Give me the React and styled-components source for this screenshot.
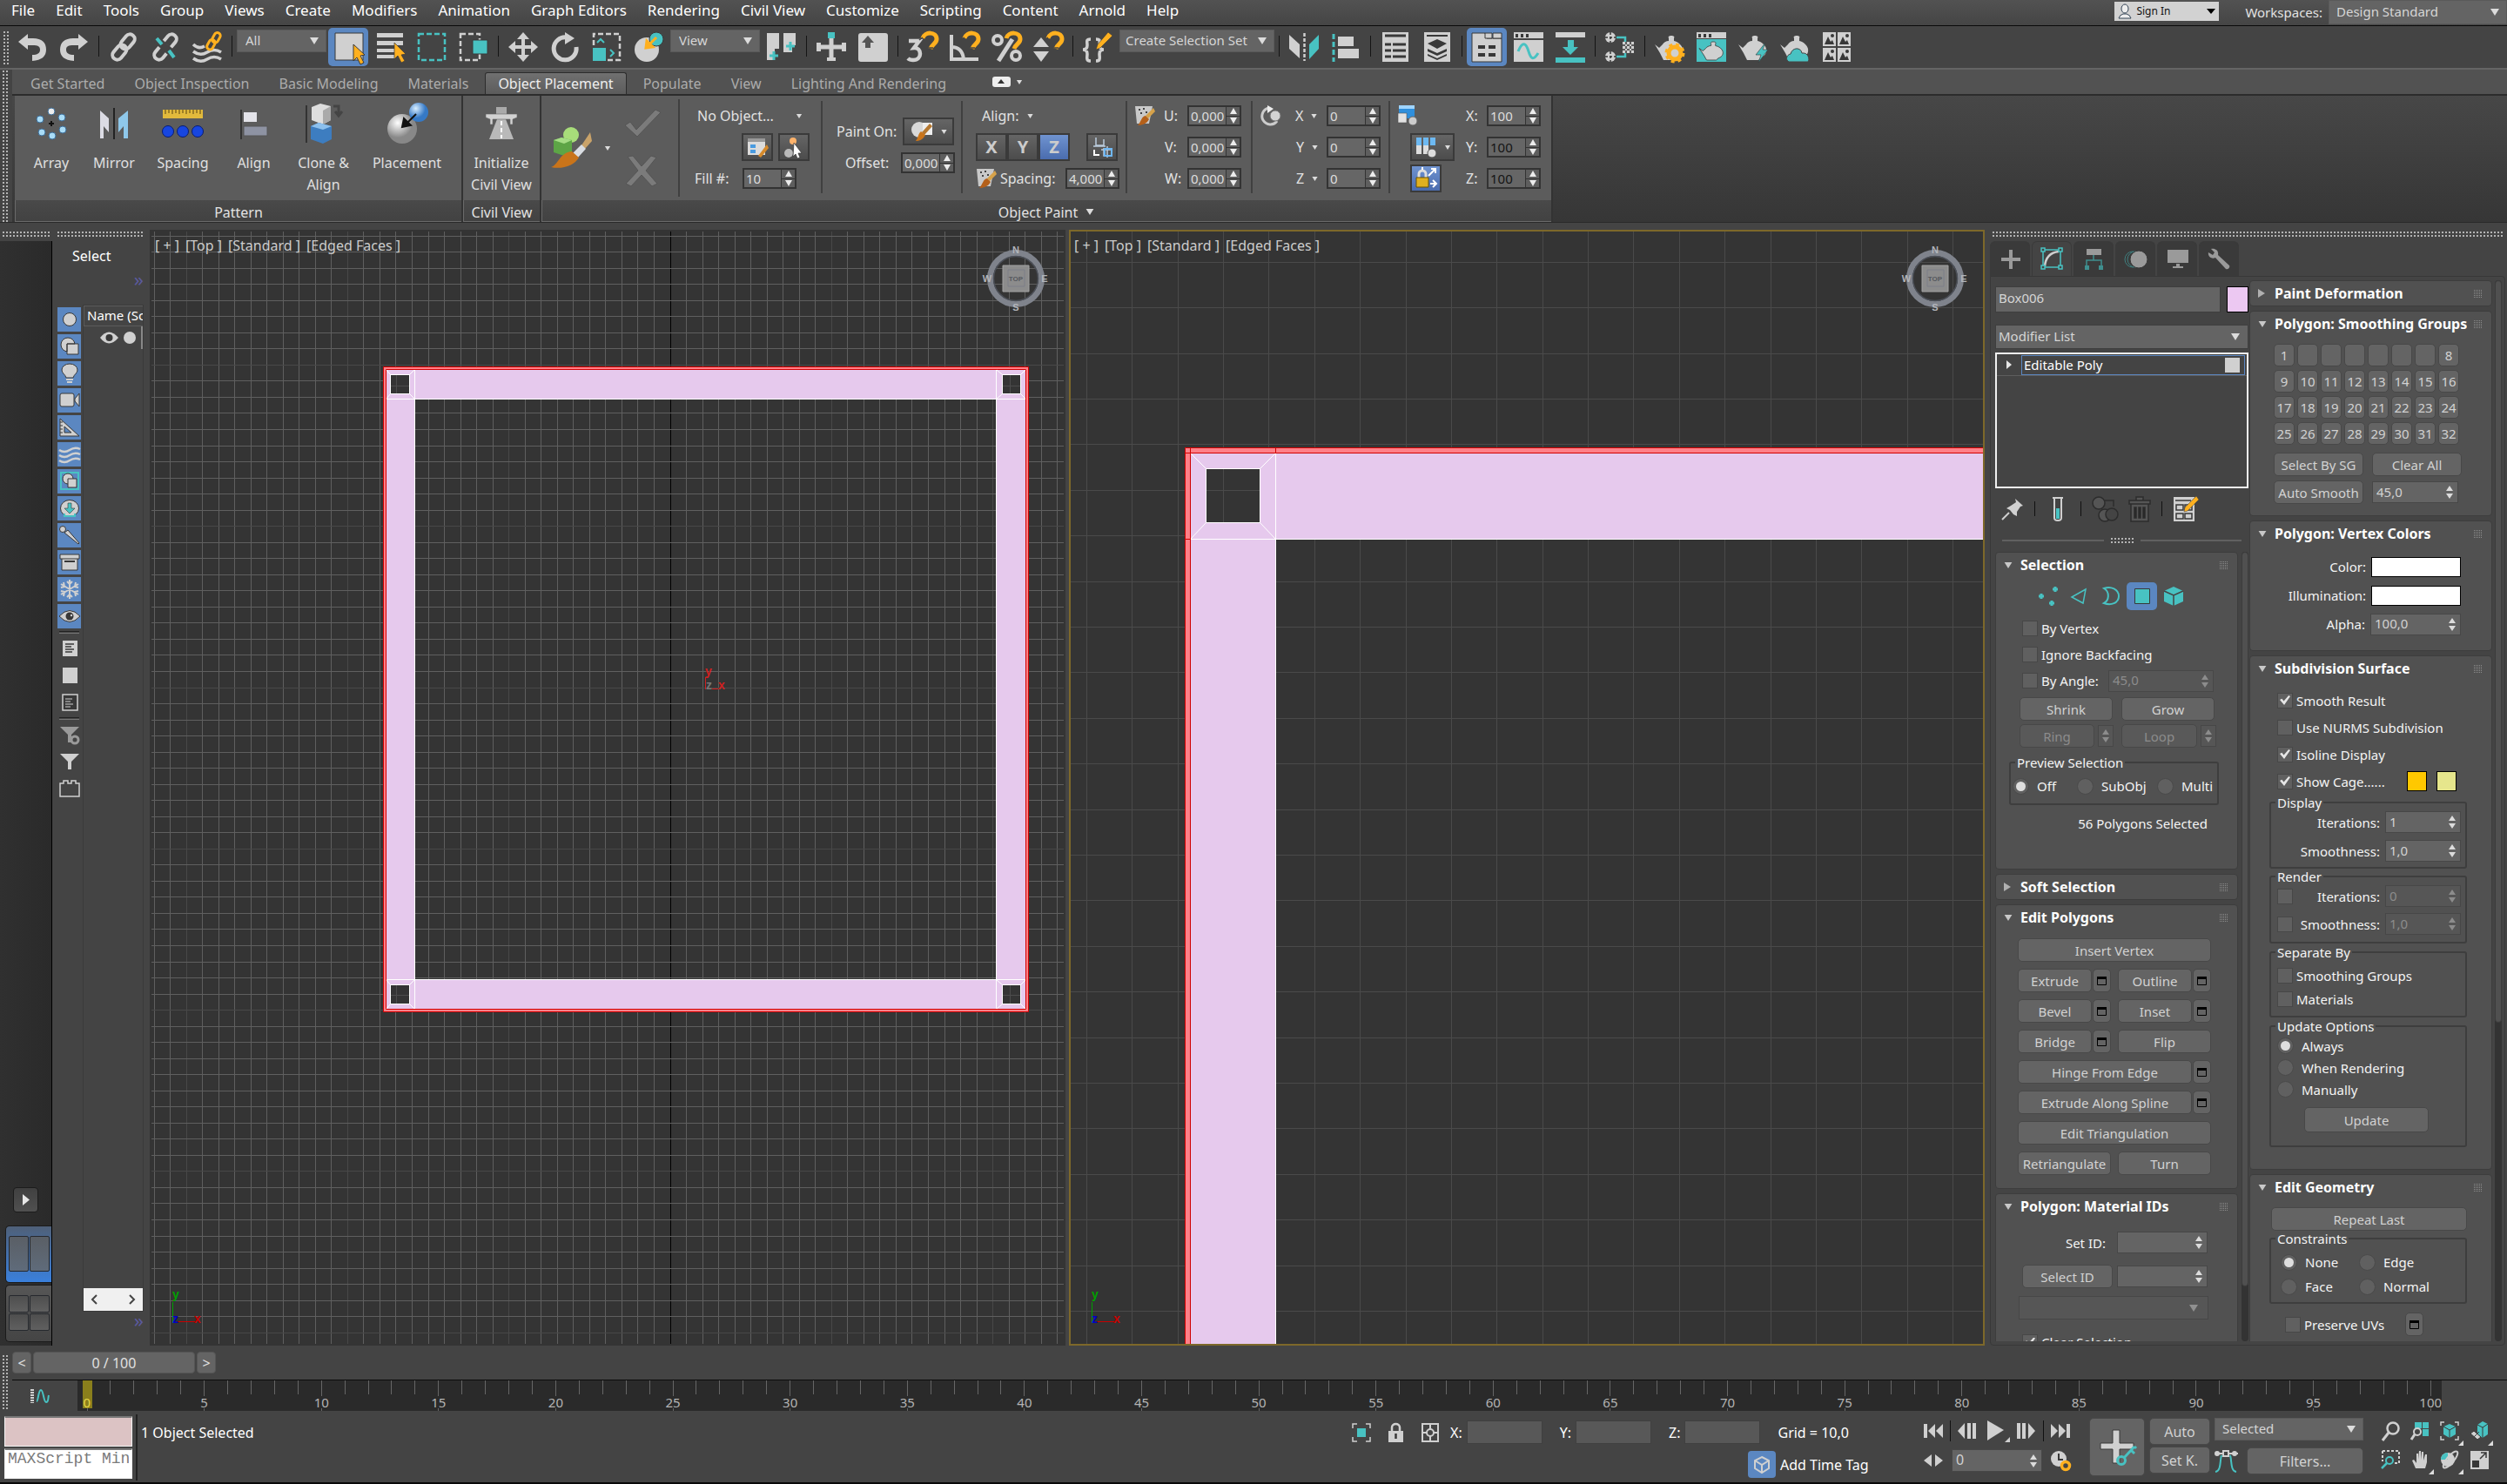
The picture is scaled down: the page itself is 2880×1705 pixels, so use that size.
import React from "react";
import styled, { createGlobalStyle, css } from "styled-components";

const L = "#d0d0d0";
const T = "#48c2c2";
const O = "#ffb01f";
const D = "#383838";

const Global = createGlobalStyle`
  *, *::before, *::after { box-sizing: border-box; }
  html, body { margin: 0; background: #444; }
  body { font-family: "Noto Sans", "Open Sans", sans-serif; font-size: 16px; line-height: 20px; color: #e2e2e2; overflow: hidden; }
  button, input, select { font: inherit; color: inherit; margin: 0; }
  svg { display: block; flex: none; overflow: visible; }
`;

const Shell = styled.div`display: flex; flex-direction: column; height: 100vh; background: #444;`;

/* ---------- shared ---------- */
const PlainButton = styled.button`
  border: 0; padding: 0; background: none; display: flex; align-items: center; justify-content: center; flex: none;
`;
const Grip = styled.div`
  flex: none;
  background: radial-gradient(circle at 1px 1px, #b4b4b4 1px, transparent 1px) 0 0 / 4px 4px;
  ${(p) => (p.$vertical ? css`width: 7px; align-self: stretch;` : css`height: 8px;`)}
`;
const SelectWrap = styled.div`
  display: grid; align-items: center; flex: none;
  width: ${(p) => (p.$w ? `${p.$w}px` : "auto")};
  height: ${(p) => p.$h || 26}px;
  > * { grid-area: 1 / 1; }
  > svg { justify-self: end; margin-right: ${(p) => p.$arrow || 9}px; pointer-events: none; }
`;
const SelectBox = styled.select`
  appearance: none; width: 100%; height: 100%; border: 1px solid ${(p) => p.$line || "#5a5a5a"}; border-radius: 0; outline: 0;
  background: ${(p) => p.$bg || "#646464"}; color: #d6d6d6; padding: 0 ${(p) => p.$pl || 8}px 2px; font-size: 15px; line-height: 20px;
`;
const Caret = ({ w = 10, h = 8, c = "#dcdcdc" }) => (
  <svg width={w} height={h} viewBox="0 0 10 8"><path d="M0 0H10L5 8Z" fill={c} /></svg>
);
const Combo = ({ label, value, bg, line, caret, pl, ...p }) => (
  <SelectWrap {...p}>
    <SelectBox aria-label={label} defaultValue={value} $bg={bg} $line={line} $pl={pl}><option>{value}</option></SelectBox>
    <Caret c={caret} />
  </SelectWrap>
);
const Svg = ({ s = 34, w, h, v, children }) => (
  <svg width={w || s} height={h || s} viewBox={v || `0 0 ${w || s} ${h || s}`} fill="none">{children}</svg>
);

/* ---------- menu bar ---------- */
const MenuBar = styled.header`
  display: flex; flex: none; height: 30px; background: linear-gradient(#525252, #454545); border-bottom: 1px solid #0a0a0a;
`;
const Menus = styled.nav`display: flex; gap: 24px; padding: 2px 13px 0; flex: 1; align-items: flex-start;`;
const MenuItem = styled(PlainButton)`font-size: 17px; line-height: 20px; color: #fff;`;
const SignIn = styled.div`
  display: flex; align-items: center; width: 120px; height: 22px; margin-top: 2px; background: #d2d2d2; padding-left: 4px; flex: none;
`;
const SignText = styled.span`font-size: 12px; color: #111; flex: 1; padding-left: 5px;`;
const WsLabel = styled.label`display: flex; gap: 7px; padding-left: 30px; line-height: 28px; font-size: 15px;`;

const menus = ["File", "Edit", "Tools", "Group", "Views", "Create", "Modifiers", "Animation", "Graph Editors", "Rendering", "Civil View", "Customize", "Scripting", "Content", "Arnold", "Help"];

/* ---------- main toolbar ---------- */
const Toolbar = styled.div`
  display: flex; flex: none; height: 50px; padding: 2px 0 0 4px; background: #444; border-bottom: 2px solid #646464;
`;
const ToolGrip = styled(Grip)`width: 7px; margin: 4px 2px 4px 0;`;
const ToolBtn = styled(PlainButton)`
  width: 48px; height: 44px; position: relative;
  ${(p) => p.$on && css`&::before { content: ""; position: absolute; inset: 0 1px; background: #5b87c1; border-radius: 5px; } > svg { position: relative; }`}
  ${(p) => p.$more && css`&::after { content: ""; position: absolute; right: 4px; bottom: 0; border: 3px solid transparent; border-right-color: #ddd; border-bottom-color: #ddd; }`}
`;
const Sep = styled.i`width: 1px; height: 24px; margin: 9px 4px 0; background: #151515; flex: none;`;
const ComboSlot = styled.div`padding: 2px 1px 0;`;

const teapot = "M0 10l5 4 4-4c1-2 4-4 7-4V3a3 2 0 0 1 3-3 3 2 0 0 1 3 3v3c5 1 9 5 10 9 1 6-3 9-6 10l-3 3H10L6 20Z";
const curveArrow = "M1 11L12 2V7H18C28 7 33 12 33 20C33 28 28 32 17 33V26C23 26 26 24 26 20C26 16 23 15 18 15H12V20Z";
const magnet = <path d="M17 7C19-1 33-1 33 8C33 13 28 13 26 19" stroke={O} strokeWidth="5" />;
const magTip = <path d="M24 18h5M17 6l-4 3" stroke="#444" strokeWidth="1.5" />;
const chain = (c) => (
  <g stroke={c} strokeWidth="4" fill="none">
    <rect x="16" y="1" width="11" height="19" rx="5.5" transform="rotate(40 21 11)" />
    <rect x="7" y="14" width="11" height="19" rx="5.5" transform="rotate(40 13 23)" />
  </g>
);
const waves = <g stroke={L} strokeWidth="3.5" fill="none"><path d="M1 14q6 6 13 2M1 22q8 6 16 1t16 0M1 30q8 6 16 1t16 0" /></g>;
const thumb = (x, y) => <g key={`${x}${y}`}><path d={`M${x} ${y}h15v16h-15z`} fill={L} /><path d={`M${x + 2} ${y + 14}l4-9 3 6 2-2 2 5z`} fill={D} /><circle cx={x + 11} cy={y + 4} r="2" fill={D} /></g>;

const ic = {
  undo: <path d={curveArrow} fill={L} />,
  redo: <path d={curveArrow} fill={L} transform="matrix(-1 0 0 1 34 0)" />,
  link: chain(L),
  unlink: <>{chain(L)}<path d="M4 6L30 29" stroke="#444" strokeWidth="9" /><path d="M7 7l6 7M21 21l6 8" stroke={T} strokeWidth="4" /></>,
  bind: <>{waves}<g stroke={O} strokeWidth="3"><rect x="24" y="0" width="7" height="12" rx="3.5" transform="rotate(30 27 6)" /><rect x="18" y="8" width="7" height="12" rx="3.5" transform="rotate(30 21 14)" /></g></>,
  select: <><path d="M2 1h32v31H2z" fill={L} stroke={D} /><path d="M23 14l13 12-5 1 4 8-4 2-4-8-4 4z" fill={O} stroke={D} /></>,
  byName: <><path d="M2 1h30v5H2zM2 10h30v5H2zM2 19h21v4H2zM2 26h21v4H2z" fill={L} /><path d="M22 12l13 13-5 1 4 7-4 2-4-8-4 4z" fill={O} stroke={D} strokeWidth=".7" /></>,
  rect: <path d="M2 2h30v30H2z" stroke={T} strokeWidth="2.5" strokeDasharray="6 3" />,
  cross: <><path d="M2 2h22v30H2z" stroke={L} strokeWidth="2.5" strokeDasharray="6 3" /><path d="M16 9h17v16H16z" fill={T} stroke={D} /></>,
  move: <path d="M17 0l7 8h-5v7h7v-5l8 7-8 7v-5h-7v7h5l-7 8-7-8h5v-7H8v5l-8-7 8-7v5h7V8h-5z" fill={L} />,
  rotate: <><path d="M19 6A13 13 0 1 0 30 17" stroke={L} strokeWidth="5" /><path d="M17 0l11 7-11 7z" fill={L} /></>,
  scale: <><path d="M2 15V2h30v30H18" stroke={L} strokeWidth="2.5" strokeDasharray="6 3" /><path d="M1 18h15v15H1z" fill={T} /><path d="M6 12l4-4 4 4M21 20l4 4-4 4" stroke={T} strokeWidth="2" /></>,
  place: <><circle cx="15" cy="20" r="14" fill={L} /><circle cx="26" cy="8" r="8" fill={T} stroke={D} /><path d="M26 6l-9 9M14 18l1-8 7 7z" stroke={O} strokeWidth="3" fill={O} /></>,
  pivot: <><path d="M0 1h14v18H9v13H0zM19 1h14v14h-4v8h-10z" fill={L} /><path d="M8 22v10M3 27h10M27 11v10M22 16h10" stroke={T} strokeWidth="3" /></>,
  manip: <><path d="M17 7v26M1 17h32" stroke={L} strokeWidth="5" /><path d="M13 0h8v7h-8z" fill={T} /><path d="M0 12h5v10H0zM29 12h5v10h-5zM12 29h10v4H12z" fill={L} /></>,
  key: <><rect x="0" y="1" width="34" height="33" rx="3" fill={L} /><path d="M11 4l7 8h-4v6H8v-6H4z" fill="#555" /></>,
  snap3: <><path d="M1 10h12l-6 8c9-1 10 14-1 14-3 0-5-1-6-2" stroke={L} strokeWidth="4.5" />{magnet}{magTip}</>,
  angle: <><path d="M2 3v28h31M2 17c8 0 13 5 14 14" stroke={L} strokeWidth="4" />{magnet}{magTip}</>,
  percent: <><circle cx="7" cy="9" r="5" stroke={L} strokeWidth="4" /><circle cx="28" cy="27" r="5" stroke={L} strokeWidth="4" /><path d="M24 8L8 33" stroke={L} strokeWidth="5" />{magnet}</>,
  spinner: <><path d="M0 17l9-11 9 11zM0 22h18l-9 12z" fill={L} />{magnet}{magTip}</>,
  braces: <><path d="M9 8c-6 0-4 3-4 7s-2 5-5 5c3 0 5 1 5 5s-2 8 4 8M15 8c6 0 4 3 4 7s2 5 5 5c-3 0-5 1-5 5s2 8-4 8" stroke={L} strokeWidth="3.5" /><path d="M29 0l5 4-14 14-5 2 2-6z" fill={O} stroke={D} strokeWidth=".6" /></>,
  mirror: <><path d="M0 3l12 11v16L0 19z" fill={L} /><path d="M34 3L23 14v17l11-12z" fill={T} /><path d="M17.5 1v32" stroke={L} strokeWidth="2.5" strokeDasharray="4 2" /></>,
  align: <><path d="M3 2v32" stroke={T} strokeWidth="3" strokeDasharray="6 3" /><path d="M8 5h18v11H8zM8 19h24v11H8z" fill={L} /></>,
  list: <><path d="M2 0h30v34H2z" fill={L} /><path d="M5 4h24M5 14h7M14 14h15M5 21h7M14 21h15M5 28h7M14 28h15" stroke={D} strokeWidth="3" /></>,
  layers: <><path d="M2 0h30v34H2z" fill={L} /><path d="M5 4h24" stroke={D} strokeWidth="2" /><path d="M17 8l11 5-11 6-11-6zM6 19l11 5 11-5v3l-11 5-11-5zM6 25l11 5 11-5v2l-11 5-11-5z" fill={D} /></>,
  ribbon: <><path d="M0 1h15l2 6h17v27H0z" fill={L} stroke={D} /><path d="M15 1h8v6h-8zM24 1h10v6H24z" fill={L} stroke={D} /><path d="M7 17h8M19 17h8M7 26h8M19 26h8" stroke={D} strokeWidth="4" /></>,
  curve: <><path d="M0 0h34v7H0zM0 9h34v25H0z" fill={L} /><path d="M2 2h3v4H2zM8 2h3v4H8zM14 2h3v4h-3z" fill={D} /><path d="M5 22c5-12 9-10 12 0s6 10 11 2" stroke={T} strokeWidth="3" /></>,
  dope: <><path d="M0 0h34v6H0z" fill={L} /><path d="M0 29h34v6H0z" fill={T} /><path d="M14 9h7v8h5l-9 9-9-9h6z" fill={T} /></>,
  schem: <><path d="M13 6h10v22H13" stroke={T} strokeWidth="2.5" /><g fill={L}><circle cx="6" cy="6" r="6" /><rect x="20" y="11" width="13" height="13" /><circle cx="6" cy="28" r="6" /></g><path d="M6 0v12M0 6h12M6 22v12M0 28h12M24 11v13M29 11v13M20 15h13M20 20h13" stroke={D} strokeWidth="1.5" strokeDasharray="3 2" /></>,
  rsetup: <><g transform="translate(0 4)"><path d={teapot} fill={L} /></g><circle cx="23" cy="24" r="7" stroke={O} strokeWidth="5" /><circle cx="23" cy="24" r="10" stroke={O} strokeWidth="3" strokeDasharray="4 4" /></>,
  rframe: <><path d="M0 0h34v7H0z" fill={L} /><path d="M0 8h34v26H0z" fill={T} /><path d="M2 2h3v4H2zM8 2h3v4H8zM14 2h3v4h-3z" fill={D} /><g transform="translate(3 11) scale(.85 .75)"><path d={teapot} fill={L} stroke={D} /></g></>,
  render: <><g transform="translate(0 4)"><path d={teapot} fill={L} /></g><path d="M31 12L20 26h6l-3 9 11-15h-6z" fill={T} stroke={D} strokeWidth=".6" /></>,
  rcloud: <><g transform="translate(0 4)"><path d={teapot} fill={L} /></g><path d="M10 34c-4-2-3-8 2-9 2-8 12-8 13-1 8-1 9 8 7 10z" fill={T} stroke="#444" /></>,
  gallery: <>{[[1, 0], [18, 0], [1, 18], [18, 18]].map(([x, y]) => thumb(x, y))}</>,
};

const tools = [
  ["undo", "Undo"], ["redo", "Redo"], "|", ["link", "Select and Link"], ["unlink", "Unlink"], ["bind", "Bind to Space Warp"], "|",
  { value: "All", label: "Selection filter", w: 103 },
  ["select", "Select Object", 1], ["byName", "Select by Name"], ["rect", "Rectangular Region", 0, 1], ["cross", "Window Crossing"], "|",
  ["move", "Move"], ["rotate", "Rotate"], ["scale", "Scale", 0, 1], ["place", "Place", 0, 1],
  { value: "View", label: "Reference coordinates", w: 103 },
  ["pivot", "Pivot Center", 0, 1], "|", ["manip", "Manipulate"], ["key", "Keyboard Override"], "|",
  ["snap3", "Snaps", 0, 1], ["angle", "Angle Snap"], ["percent", "Percent Snap"], ["spinner", "Spinner Snap"], "|", ["braces", "Edit Selection Sets"],
  { value: "Create Selection Set", label: "Named selection sets", w: 178, pl: 6 }, "|",
  ["mirror", "Mirror"], ["align", "Align", 0, 1], "|", ["list", "Scene Explorer"], ["layers", "Layer Explorer"], "|",
  ["ribbon", "Ribbon", 1], ["curve", "Curve Editor"], ["dope", "Dope Sheet"], "|", ["schem", "Material Editor", 0, 1], "|",
  ["rsetup", "Render Setup"], ["rframe", "Rendered Frame"], ["render", "Render", 0, 1], ["rcloud", "Cloud Render"], ["gallery", "Gallery"],
];

/* ---------- ribbon ---------- */
const RibbonWrap = styled.section`display: flex; flex: none; height: 176px; padding-left: 3px; border-bottom: 1px solid #2a2a2a;`;
const RibbonGrip = styled(Grip)`margin: 1px 4px 0 0;`;
const RibbonMain = styled.div`flex: 1; min-width: 0; display: flex; flex-direction: column;`;
const Tabs = styled.div`display: flex; height: 30px; background: #525252; border-bottom: 2px solid #2c2c2c; padding: 3px 0 0 4px; flex: none;`;
const Tab = styled(PlainButton)`
  padding: 0 14px; margin: 0 2px; height: 25px; color: #acacac; border: 1px solid transparent; border-bottom: 0; border-radius: 3px 3px 0 0;
  ${(p) => p.$on && css`background: linear-gradient(#707070, #5c5c5c); color: #eee; border-color: #2c2c2c;`}
`;
const TabExtra = styled(PlainButton)`gap: 6px; margin-left: 36px; padding-bottom: 3px;`;
const Panels = styled.div`flex: 1; display: flex; padding-left: 3px; background: linear-gradient(#474747, #363636);`;
const Panel = styled.div`display: flex; flex-direction: column; background: #5c5c5c; border-right: 2px solid #333; flex: none; width: ${(p) => p.$w}px;`;
const PanelBody = styled.div`flex: 1; display: flex; align-items: flex-start;`;
const PanelFoot = styled.div`
  height: 25px; display: flex; align-items: center; justify-content: center; gap: 8px; padding-top: 3px;
  background: linear-gradient(#494949, #424242); border-bottom: 1px solid #6a6a6a; border-left: 1px solid #6a6a6a;
`;
const BigBtn = styled(PlainButton)`
  flex-direction: column; justify-content: flex-start; width: ${(p) => p.$w}px; line-height: 25px; padding-top: 8px; color: #e0e0e0;
  > svg { margin-bottom: 9px; }
`;
const PaintGroup = styled.div`
  display: grid; grid-auto-rows: 36px; align-content: center; height: 106px; margin-top: 6px; width: ${(p) => p.$w}px; flex: none;
  border-right: ${(p) => (p.$last ? 0 : 2)}px solid #404040; padding-left: ${(p) => p.$pl || 8}px;
`;
const PRow = styled.div`display: flex; align-items: center;`;
const Cell = styled.span`display: flex; align-items: center; width: ${(p) => p.$w}px; flex: none; white-space: nowrap; gap: 9px; padding-left: ${(p) => p.$pl || 0}px;`;
const RBtn = styled(PlainButton)`
  width: ${(p) => p.$w || 36}px; height: 32px; gap: 9px; border: 2px solid #3a3a3a; color: #ccc; font-weight: 700; font-size: 20px; margin-left: ${(p) => p.$ml || 0}px;
  background: ${(p) => (p.$on ? "linear-gradient(#6f93d0, #4a6cae)" : "linear-gradient(#656565, #4c4c4c)")};
`;
const RSpin = styled.span`display: flex; width: 62px; height: 24px; border: 2px solid #333; background: #666; flex: none;`;
const RInput = styled.input`width: 42px; border: 0; padding: 0 0 1px 2px; background: none; outline: 0; font-size: 15px; color: ${(p) => (p.$dim ? "#141414" : "#dedede")};`;
const RArrows = styled.span`
  width: 16px; display: grid; place-items: center; border-left: 1px solid #333; background: linear-gradient(#5e5e5e 49%, #333 49%, #333 54%, #5e5e5e 54%);
`;
const RibSpin = ({ label, value, dim }) => (
  <RSpin><RInput aria-label={label} defaultValue={value} $dim={dim} /><RArrows><Svg w={8} h={18}><path d="M0 7l4-7 4 7zM0 11h8l-4 7z" fill="#ececec" /></Svg></RArrows></RSpin>
);
const PaintStart = styled.div`display: flex; align-items: center; gap: 14px; padding-left: 10px; height: 112px; width: 159px; margin-top: 4px; border-right: 2px solid #404040; flex: none;`;
const CheckCol = styled.div`display: grid; gap: 18px;`;

const Ball = ({ x, y, r = 4, c }) => <circle cx={x} cy={y} r={r} fill={c} stroke="#3b6d99" strokeWidth="1" />;
const icArray = <Svg s={36}>{[[18, 4, "#eee"], [30, 11], [31, 25], [19, 32], [7, 28], [5, 13]].map(([x, y, c]) => <Ball key={x} x={x} y={y} c={c || "#a9dcf7"} />)}<path d="M18 15v6M15 18h6" stroke="#111" strokeWidth="2" /></Svg>;
const icMirror = <Svg s={36}><path d="M18 0v36" stroke="#222" strokeWidth="2" /><path d="M2 3l10 9v16l-6-7v14H2z" fill="#dcdce4" /><path d="M34 3l-11 9v16l6-7v14h5z" fill="#8fc8ea" /></Svg>;
const icSpacing = <Svg w={48} h={36}><path d="M1 2h46v10H1z" fill="#e2ba3c" /><path d="M4 2v5M8 2v4M12 2v5M16 2v4M20 2v5M24 2v4M28 2v5M32 2v4M36 2v5M40 2v4M44 2v5" stroke="#5b4510" />{[7, 24, 41].map((x) => <circle key={x} cx={x} cy="27" r="6.5" fill="#1746e0" stroke="#0a1d70" />)}</Svg>;
const icAlign = <Svg s={36}><path d="M3 2v34" stroke="#333" strokeWidth="2" /><path d="M6 5h15v11H6z" fill="#e3e3e9" /><path d="M6 21h27v11H6z" fill="#8e93a3" stroke="#555" /></Svg>;
const icClone = <Svg w={44} h={48}><path d="M2 3v43" stroke="#333" strokeWidth="2" /><path d="M8 5l10-4 12 3v16l-9 5-13-5z" fill="#dedede" /><path d="M21 9l9-5v16l-9 5z" fill="#aaa" /><path d="M7 27l9-4 15 4v15l-10 5-14-5z" fill="#3d7dc0" /><path d="M7 27l9-4 15 4-10 4z" fill="#8cc0ee" /><path d="M33 4h6v9M35 10l4 5 4-5" stroke="#444" strokeWidth="3" /></Svg>;
const icPlacement = <Svg s={48}><defs><radialGradient id="gw" cx=".35" cy=".3"><stop stopColor="#fff" /><stop offset="1" stopColor="#888" /></radialGradient><radialGradient id="gb" cx=".35" cy=".3"><stop stopColor="#d9eeff" /><stop offset="1" stopColor="#3579c6" /></radialGradient></defs><circle cx="18" cy="30" r="17" fill="url(#gw)" /><circle cx="37" cy="11" r="11" fill="url(#gb)" /><path d="M34 13L22 25M18 28l2-10 8 8z" stroke="#111" strokeWidth="2" fill="#111" /></Svg>;
const icRoad = <Svg s={38}><path d="M14 14h10l9 23H5z" fill="#b9b9b9" /><path d="M19 16v20" stroke="#fff" strokeWidth="2" strokeDasharray="5 3" /><path d="M13 0h12v8H13z" fill="#aaa" /><path d="M1 8h36v4l-5 2v6h-3v-6H9v6H6v-6l-5-2z" fill="#d2d2d2" stroke="#666" strokeWidth=".6" /></Svg>;
const icPaint = <Svg s={48}><circle cx="24" cy="9" r="9" fill="#a8dd7a" /><path d="M4 15l9-3 12 3v14l-9 4-12-4z" fill="#5da546" /><path d="M4 15l9-3 12 3-9 4z" fill="#a5dd85" /><path d="M46 6l2 10-8 9-4-4z" fill="#c9a36a" /><path d="M36 20l5 5-10 11-6-5z" fill="#d9dde2" /><path d="M25 28l8 7C28 44 14 49 1 46c8-2 10-17 24-18z" fill="#c9741a" /></Svg>;
const icBrushSmall = <Svg s={24}><path d="M1 1h20l-4 20H3z" fill="#c9c9c9" /><path d="M5 5h2M10 4h2M7 9h2M13 8h2" stroke="#444" strokeWidth="2" /><path d="M22 3l2 4-8 8-3-3z" fill="#d6a24a" /><path d="M13 12l4 4c-3 6-9 7-13 7 4-4 4-10 9-11z" fill="#b4601a" /></Svg>;

const Ribbon = () => (
  <RibbonWrap>
    <RibbonGrip $vertical />
    <RibbonMain>
      <Tabs role="tablist">
        {["Get Started", "Object Inspection", "Basic Modeling", "Materials", "Object Placement", "Populate", "View", "Lighting And Rendering"].map((t) => (
          <Tab key={t} role="tab" $on={t === "Object Placement"}>{t}</Tab>
        ))}
        <TabExtra aria-label="Minimize ribbon"><Svg w={21} h={12}><rect width="21" height="12" rx="3" fill="#eee" /><path d="M6 8l4-5 4 5z" fill="#333" /></Svg><Caret w={8} h={5} /></TabExtra>
      </Tabs>
      <Panels>
        <Panel $w={515}>
          <PanelBody>
            <BigBtn $w={84}><Svg w={36} h={48} v="0 -6 36 48">{icArray}</Svg>Array</BigBtn>
            <BigBtn $w={60}><Svg w={36} h={48} v="0 -6 36 48">{icMirror}</Svg>Mirror</BigBtn>
            <BigBtn $w={98}><Svg w={48} h={48} v="0 -6 48 48">{icSpacing}</Svg>Spacing</BigBtn>
            <BigBtn $w={65}><Svg w={36} h={48} v="0 -6 36 48">{icAlign}</Svg>Align</BigBtn>
            <BigBtn $w={95}>{icClone}<span>Clone &amp;<br />Align</span></BigBtn>
            <BigBtn $w={97}>{icPlacement}Placement</BigBtn>
          </PanelBody>
          <PanelFoot>Pattern</PanelFoot>
        </Panel>
        <Panel $w={90}>
          <PanelBody><BigBtn $w={88}><Svg w={38} h={48} v="0 -5 38 48">{icRoad}</Svg><span>Initialize<br />Civil View</span></BigBtn></PanelBody>
          <PanelFoot>Civil View</PanelFoot>
        </Panel>
        <Panel $w={1162}>
          <PanelBody>
            <PaintStart>
              {icPaint}<Caret w={8} h={5} />
              <CheckCol>
                <Svg w={44} h={34}><path d="M2 19l6-4 7 9L37 1l6 3-27 28z" fill="#7b7b7b" stroke="#555" /></Svg>
                <Svg w={44} h={38}><path d="M5 3l6-1 10 12L32 2l6 2-12 15 13 15-6 3-12-13L9 37l-6-3 14-15z" fill="#7b7b7b" stroke="#555" /></Svg>
              </CheckCol>
            </PaintStart>
            <PaintGroup $w={164} $pl={17}>
              <PRow><Cell $w={116} $pl={3}>No Object...</Cell><Caret w={8} h={5} /></PRow>
              <PRow><Cell $w={54} /><RBtn aria-label="Edit object list"><Svg s={26}><path d="M2 3h20v19H2z" fill="#dcdcdc" /><path d="M2 3h20v4H2z" fill="#999" /><path d="M5 10h6v4H5zM5 16h6v4H5z" fill="#4a9be0" /><path d="M24 10l2 4-9 11-3-2z" fill="#d68a2b" /></Svg></RBtn><RBtn $ml={6} aria-label="Pick object"><Svg s={26}><circle cx="7" cy="20" r="5" fill="#bbb" /><circle cx="12" cy="6" r="4" fill="#ffb36b" /><path d="M13 8l9 12-4 0 2 5-3 1-2-5-3 3z" fill="#fff" stroke="#333" strokeWidth=".7" /></Svg></RBtn></PRow>
              <PRow><Cell $w={55}>Fill #:</Cell><RibSpin label="Fill count" value="10" /></PRow>
            </PaintGroup>
            <PaintGroup $w={161} $pl={16}>
              <PRow><Cell $w={76}>Paint On:</Cell><RBtn $w={59} aria-label="Paint on"><Svg s={26}><circle cx="10" cy="11" r="9" fill="#d8d8d8" /><path d="M14 3h11v14H14z" fill="#eee" /><path d="M22 4l3 3-9 10-3-3z" fill="#b57830" /><path d="M12 13l5 4c-3 6-7 7-11 7 3-4 3-9 6-11z" fill="#c9741a" /></Svg><Caret w={7} h={5} /></RBtn></PRow>
              <PRow><Cell $w={74} $pl={10}>Offset:</Cell><RibSpin label="Offset" value="0,000" /></PRow>
            </PaintGroup>
            <PaintGroup $w={189} $pl={15}>
              <PRow><Cell $w={100} $pl={7}>Align:<Caret w={7} h={5} /></Cell></PRow>
              <PRow><RBtn>X</RBtn><RBtn>Y</RBtn><RBtn $on>Z</RBtn><Cell $w={19} /><RBtn aria-label="Align to normal"><Svg s={26}><path d="M6 2v9h9V4M3 12h14M15 14v9h8M12 16h13M19 12v13" stroke="#bcd" strokeWidth="1.5" /><path d="M16 15h8v8h-8z" stroke="#6fb7f2" strokeWidth="2" /><path d="M4 16v6h6" stroke="#fff" strokeWidth="2" /></Svg></RBtn></PRow>
              <PRow>{icBrushSmall}<Cell $w={79} $pl={4}>Spacing:</Cell><RibSpin label="Spacing" value="4,000" /></PRow>
            </PaintGroup>
            <PaintGroup $w={144}>
              <PRow>{icBrushSmall}<Cell $w={37} $pl={10}>U:</Cell><RibSpin label="U" value="0,000" /></PRow>
              <PRow><Cell $w={61} $pl={35}>V:</Cell><RibSpin label="V" value="0,000" /></PRow>
              <PRow><Cell $w={61} $pl={35}>W:</Cell><RibSpin label="W" value="0,000" /></PRow>
            </PaintGroup>
            <PaintGroup $w={158}>
              <PRow><Svg s={24}><path d="M11 3A9.5 9.5 0 1 0 20 18" stroke="#ccc" strokeWidth="3" /><path d="M9 0l7 4-7 5z" fill="#eee" /><circle cx="18" cy="12" r="6" fill="#d4d4d4" stroke="#777" /></Svg><Cell $w={53} $pl={17}>X<Caret w={7} h={5} /></Cell><RibSpin label="Rotate X" value="0" /></PRow>
              <PRow><Cell $w={77} $pl={42}>Y<Caret w={7} h={5} /></Cell><RibSpin label="Rotate Y" value="0" /></PRow>
              <PRow><Cell $w={77} $pl={42}>Z<Caret w={7} h={5} /></Cell><RibSpin label="Rotate Z" value="0" /></PRow>
            </PaintGroup>
            <PaintGroup $w={184} $last>
              <PRow><Svg s={24}><path d="M2 0h18v15H2z" fill="#2f8fdc" /><path d="M2 0h18v4H2z" fill="#9fd4ff" /><path d="M1 9h10v11H1z" fill="#e2e2e2" stroke="#555" strokeWidth=".6" /><circle cx="18" cy="18" r="5" fill="#ccc" stroke="#666" /></Svg><Cell $w={79} $pl={55}>X:</Cell><RibSpin label="Scale X" value="100" /></PRow>
              <PRow><Cell $w={15} /><RBtn $w={51} aria-label="Scale mode"><Svg s={26}><path d="M2 2h6v9H2zM10 2h6v9h-6zM18 2h6v9h-6z" fill="#6db9f2" /><path d="M2 11h6v10H2zM10 11h6v10h-6z" fill="#ddd" /><circle cx="20" cy="20" r="5" fill="#ddd" stroke="#555" /></Svg><Caret w={6} h={5} /></RBtn><Cell $w={37} $pl={13}>Y:</Cell><RibSpin label="Scale Y" value="100" dim /></PRow>
              <PRow><Cell $w={15} /><RBtn $on aria-label="Lock scale axes"><Svg s={26}><path d="M5 12V8a4 4 0 0 1 8 0v4" stroke="#ddd" strokeWidth="3" /><path d="M2 12h14v11H2z" fill="#e0b020" stroke="#6b5200" /><path d="M16 10l7-7M19 2h5v5M18 19h6M21 15l4 4-4 4M9 3V0" stroke="#fff" strokeWidth="2" /></Svg></RBtn><Cell $w={52} $pl={28}>Z:</Cell><RibSpin label="Scale Z" value="100" dim /></PRow>
            </PaintGroup>
          </PanelBody>
          <PanelFoot>Object Paint<Caret w={12} h={7} /></PanelFoot>
        </Panel>
      </Panels>
    </RibbonMain>
  </RibbonWrap>
);

/* ---------- workspace ---------- */
const Workspace = styled.main`flex: 1; min-height: 0; display: flex;`;
const Strip = styled.aside`width: 60px; flex: none; display: flex; flex-direction: column; padding-top: 10px; gap: 3px;`;
const StripGrip = styled(Grip)`margin-left: 3px; width: 55px;`;
const StripBody = styled.div`
  flex: 1; display: flex; flex-direction: column; justify-content: flex-end; gap: 2px; padding: 0 0 4px 6px;
  background: linear-gradient(90deg, #303030, #2a2a2a); border-right: 1px solid #000;
`;
const PlayTab = styled(PlainButton)`width: 29px; height: 29px; margin: 0 0 13px 9px; background: linear-gradient(#404040, #505050); border: 1px solid #1c1c1c; border-radius: 4px;`;
const LayoutTab = styled(PlainButton)`
  height: 66px; border: 1px solid #1b1b1b; border-right: 0; border-radius: 5px 0 0 5px; display: grid; gap: 1px; padding: 11px 2px 12px 3px;
  grid-template-columns: 1fr 1fr; align-items: stretch; justify-content: stretch;
  background: ${(p) => (p.$on ? "linear-gradient(#4f6078, #3a80dc)" : "linear-gradient(#565656, #454545)")};
`;
const Pane = styled.i`border: 1px solid #26292e; border-radius: 2px; background: linear-gradient(#5a5f66, #5f6b7a);
  ${(p) => p.$grey && css`background: linear-gradient(#4e4e4e, #606060);`}`;

const Explorer = styled.aside`width: 112px; flex: none; display: flex; flex-direction: column; padding: 10px 6px 0;`;
const ExTop = styled.div`height: 76px; padding: 12px 1px 0 0;`;
const ExTitle = styled.div`padding-left: 17px; color: #fff; font-size: 16px; line-height: 16px;`;
const More = styled.div`text-align: right; color: #5b5a9e; font-size: 22px; line-height: 36px;`;
const ExMain = styled.div`flex: 1; display: flex; min-height: 0; gap: 2px;`;
const ExIcons = styled.div`width: 27px; display: flex; flex-direction: column; gap: 3px; padding-top: 3px; flex: none;`;
const ExBtn = styled(PlainButton)`height: 28px; width: 27px; background: ${(p) => (p.$on ? "#5b87c1" : "none")};`;
const ExSep = styled.hr`width: 23px; height: 3px; margin: 0 2px; border: 0; border-top: 1px solid #222; border-bottom: 1px solid #777;`;
const ExList = styled.div`width: 70px; flex: none; border: 1px solid #3a3a3a; display: flex; flex-direction: column; overflow: hidden;`;
const ExHead = styled.div`height: 24px; border: 1px solid #5c5c5c; border-right: 0; padding-left: 3px; white-space: nowrap; font-size: 15px; line-height: 20px; color: #fff;`;
const ExItem = styled.div`display: flex; align-items: center; gap: 6px; height: 26px; padding-left: 19px; border-right: 2px solid #888;`;
const ExScroll = styled.div`display: flex; justify-content: space-between; padding: 0 8px; height: 26px; margin-top: auto; background: #f0f0f0; align-items: center;`;
const ExBottom = styled.div`height: 39px; padding-right: 1px; > div { line-height: 18px; }`;

const exIcons = [
  <circle cx="12" cy="12" r="7.5" fill={L} stroke={D} />,
  <><circle cx="10" cy="10" r="8" fill={L} stroke={D} /><path d="M9 9h13v12H9z" fill={L} stroke={D} /><path d="M9 18V9h9" stroke={D} /></>,
  <><path d="M3 8a9 7 0 0 1 18 0c0 4-4 5-5 9H8C7 13 3 12 3 8z" fill={L} stroke={D} /><path d="M8 19h8M9 22h6" stroke={L} strokeWidth="2" /></>,
  <><rect x="1" y="4" width="16" height="15" rx="2" fill={L} stroke={D} /><path d="M18 10l5-6v15l-5-6z" fill={L} stroke={D} /></>,
  <><path d="M1 2v20h22z" fill={L} stroke={D} /><path d="M6 11v7h8z" fill="#5b87c1" stroke={D} /><path d="M1 6h3M1 10h3M1 14h3M1 18h3" stroke={D} /></>,
  <g stroke={L} strokeWidth="2.5"><path d="M0 7q6 4 12 0t12-1M0 13q6 4 12 0t12-1M0 19q6 4 12 0t12-1" /></g>,
  <><path d="M2 2h20v19H2z" stroke={T} strokeWidth="2" /><circle cx="10" cy="9" r="6" fill={L} stroke={D} /><path d="M10 9h10v10H10z" fill={L} stroke={D} /></>,
  <><ellipse cx="12" cy="12" rx="10.5" ry="9.5" fill={L} stroke={D} /><path d="M10 6h4v6h4l-6 6-6-6h4z" fill={T} stroke={D} strokeWidth=".6" /><path d="M6 18v3h12v-3" stroke={T} strokeWidth="2" /></>,
  <><circle cx="4" cy="5" r="3.5" fill={L} stroke={D} /><path d="M6 9l4-3 13 15-1 1z" fill={L} stroke={D} /></>,
  <><path d="M3 7h18v14H3z" fill={L} stroke={D} /><path d="M1 3h22v5H1z" fill={L} stroke={D} /><path d="M6 11h12" stroke={D} strokeWidth="2" /></>,
  <g stroke={L} strokeWidth="2"><path d="M12 1v22M2 6l20 12M2 18L22 6M9 3l3 3 3-3M9 21l3-3 3 3M2 10l4-1-1-5M22 14l-4 1 1 5M22 10l-4-1 1-5M2 14l4 1-1 5" /></g>,
  <><path d="M0 12q12-13 24 0q-12 13-24 0z" fill={L} stroke={D} /><circle cx="12" cy="12" r="4.5" fill={D} /><circle cx="14" cy="11" r="1.2" fill={L} /></>,
];
const exIcons2 = [
  <><path d="M4 3h17v18H4z" fill={L} /><path d="M7 7h10M7 10h7M7 13h10M7 16h8" stroke={D} strokeWidth="1.5" /></>,
  <path d="M4 3h17v18H4z" fill={L} />,
  <><path d="M4 3h17v18H4z" fill={D} stroke={L} strokeWidth="1.5" /><path d="M7 8h8M7 11h6M7 14h9M7 17h6" stroke={L} /></>,
];
const funnel = "M1 3h22l-9 9v9h-4v-9z";
const exIcons3 = [
  <><path d={funnel} fill="#9a9a9a" /><circle cx="18" cy="18" r="4" stroke="#9a9a9a" strokeWidth="3" fill="#444" /></>,
  <path d={funnel} fill={L} />,
  <path d="M1 6h4V3h5v3h4V3h5v3h4v15H1z" stroke={L} strokeWidth="1.5" />,
];
const nm = ["Geometry", "Shapes", "Lights", "Cameras", "Helpers", "Space Warps", "Groups", "XRefs", "Bones", "Containers", "Frozen", "Hidden"];

/* ---------- viewports ---------- */
const ViewRow = styled.div`flex: 1; min-width: 0; display: flex; gap: 4px; padding-top: 8px;`;
const View = styled.section`
  flex: 1; min-width: 0; position: relative; overflow: hidden; background: #343434; border: ${(p) => (p.$active ? "2px solid #7d682a" : "2px solid #343434")};
`;
const Scene = styled.svg`width: 100%; height: 100%;`;
const ViewLabels = styled.div`position: absolute; top: 6px; left: 4px; display: flex; gap: 7px; font-size: 16px; color: #ccc;`;
const CubeSlot = styled.div`position: absolute; top: 15px; right: 16px;`;
const AxisSlot = styled.div`position: absolute; left: 22px; bottom: 22px;`;

const ViewCube = () => (
  <Svg s={78}>
    <circle cx="39" cy="39" r="29.5" stroke="#7f838c" strokeWidth="7" />
    <circle cx="39" cy="39" r="25.5" stroke="#4c5058" strokeWidth="1.5" />
    <path d="M24 24h30v30H24z" fill="#8c8c8c" stroke="#a3a3a3" />
    <path d="M30 29h19v19H30z" stroke="#7c7f88" />
    <g fill="#b2b5ba" fontSize="11" fontWeight="700" textAnchor="middle" fontFamily="Liberation Sans, sans-serif">
      <text x="39" y="10">N</text><text x="39" y="76">S</text><text x="6" y="43">W</text><text x="72" y="43">E</text>
      <text x="39" y="42" fontSize="8" fill="#55585e">TOP</text>
    </g>
  </Svg>
);
const Axis = () => (
  <Svg w={34} h={38}>
    <path d="M2.5 12v24" stroke="#00a000" /><path d="M8 34.5h20" stroke="#c80000" />
    <g fontSize="14" fontWeight="700" fontFamily="Liberation Sans, sans-serif"><text x="2" y="8" fill="#00a000">y</text><text x="2" y="36" fill="#0000c8">z</text><text x="27" y="36" fill="#c80000">x</text></g>
  </Svg>
);
const px = (n) => Math.floor(n) + 0.5;
const range = (n, a = 0) => Array.from({ length: n }, (_, i) => i + a);

const Joint = ({ x, y, w, h, hx, hy, hw, hh }) => (
  <g stroke="#fff" fill="none">
    <rect x={hx} y={hy} width={hw} height={hh} fill="#343434" />
    <path d={`M${x} ${y}L${hx} ${hy}M${x + w} ${y}L${hx + hw} ${hy}M${x} ${y + h}L${hx} ${hy + hh}M${x + w} ${y + h}L${hx + hw} ${hy + hh}`} />
  </g>
);

const LeftScene = () => {
  const step = 18.53, cx = 596, cy = 524;
  return (
    <Scene>
      {range(120, -60).map((i) => <path key={`v${i}`} d={`M${px(cx + i * step)} 0V4000`} stroke={i === 0 ? "#000" : i % 10 ? "#5f5f5f" : "#484848"} />)}
      {range(120, -30).map((i) => <path key={`h${i}`} d={`M0 ${px(cy + i * step)}H4000`} stroke={i % 10 ? "#5f5f5f" : "#484848"} />)}
      <path fillRule="evenodd" fill="#e6c9ed" d="M266.5 155.5h741v741h-741zM302.5 192.5v667h668v-667z" />
      <path d="M268 155.5v741M1006 155.5v741M266.5 157h741M266.5 895h741" stroke="#ff8088" strokeWidth="2" />
      <path d="M266.5 155.5h741v741h-741zM269.5 158.5h735v735h-735z" stroke="#d00000" fill="none" />
      <path d="M302.5 192.5h668v667h-668z" stroke="#fff" fill="none" />
      <path d="M270 192.5h33M302.5 159v34M970.5 159v34M970 192.5h34M270 859.5h33M302.5 860v33M970.5 860v33M970 859.5h34" stroke="#fff" />
      <Joint x={270} y={159} w={32} h={33} hx={274.5} hy={164.5} hw={22} hh={22} />
      <Joint x={971} y={159} w={33} h={33} hx={977.5} hy={164.5} hw={21} hh={22} />
      <Joint x={270} y={860} w={32} h={33} hx={274.5} hy={865.5} hw={22} hh={22} />
      <Joint x={971} y={860} w={33} h={33} hx={977.5} hy={865.5} hw={21} hh={22} />
      <path d="M281.5 165v21M275 177.5h21M986.5 165v21M978 177.5h20M281.5 866v21M275 877.5h21M986.5 866v21M978 877.5h20" stroke="#4c4c4c" />
      <path d="M636.5 526v-14h3M644 525.5h7" fill="none" stroke="#d02020" />
      <g fontSize="14" fontWeight="700" fontFamily="Liberation Sans, sans-serif" fill="#d02020"><text x="636" y="510">y</text><text x="637" y="526" fill="#777">z</text><text x="651" y="526">x</text></g>
    </Scene>
  );
};
const RightScene = () => (
  <Scene>
    {range(60).map((i) => <path key={`v${i}`} d={`M${px(18.4 + i * 52.38)} 0V4000`} stroke="#4a4a4a" />)}
    {range(60, -1).map((i) => <path key={`h${i}`} d={`M0 ${px(35.3 + i * 52.4)}H4000`} stroke="#4a4a4a" />)}
    <path fillRule="evenodd" fill="#e6c9ed" d="M131.5 248.5H4000V353.5H235.5V4000H131.5z" />
    <path fill="#ff8088" stroke="#d00000" d="M131.5 248.5H4000V254.5H137.5V4000H131.5z" />
    <path d="M131.5 254.5h6v-6M235.5 248v6M131 353.5h6" stroke="#d00000" fill="none" />
    <path d="M4000 353.5H138M235.5 255V4000" stroke="#fff" />
    <Joint x={138} y={255} w={97} h={98} hx={155.5} hy={272.5} hw={62} hh={62} />
    <path d="M175.5 273v61M156 297.5h61" stroke="#4a4a4a" />
  </Scene>
);
const Viewport = ({ active, children }) => (
  <View $active={active} aria-label="Top viewport">
    {children}
    <ViewLabels><span>[ + ]</span><span>[Top ]</span><span>[Standard ]</span><span>[Edged Faces ]</span></ViewLabels>
    <CubeSlot><ViewCube /></CubeSlot>
    <AxisSlot><Axis /></AxisSlot>
  </View>
);

/* ---------- command panel ---------- */
const Command = styled.aside`width: 600px; flex: none; display: flex; flex-direction: column; padding: 10px 2px 0 6px; font-size: 15px;`;
const CmdGrip = styled(Grip)`margin: 0 3px;`;
const CmdTabs = styled.div`display: flex; gap: 2px; padding-top: 3px;`;
const CmdTab = styled(PlainButton)`width: 46px; height: 40px; border-radius: 6px 6px 0 0; background: ${(p) => (p.$on ? "#444" : "#3a3a3a")}; border: 1px solid #3a3a3a; border-bottom: 0; margin-bottom: ${(p) => (p.$on ? -1 : 0)}px; z-index: 1;`;
const CmdBody = styled.div`flex: 1; min-height: 0; display: flex; border: 1px solid #383838; border-radius: 0 4px 4px 4px; padding: 4px 2px 4px 5px;`;
const ColA = styled.div`width: 291px; display: flex; flex-direction: column; min-height: 0; flex: none;`;
const ColB = styled.div`flex: 1; min-width: 0; display: flex; min-height: 0; gap: 3px; padding-left: 1px;`;
const NameRow = styled.div`display: flex; gap: 7px; padding-top: 7px; height: 37px;`;
const NameInput = styled.input`flex: 1; min-width: 0; background: #646464; border: 1px solid #3e3e3e; padding: 0 3px 5px; color: #d6d6d6;`;
const Swatch = styled(PlainButton)`width: ${(p) => p.$w || 24}px; height: ${(p) => p.$h || 23}px; background: ${(p) => p.$c}; border: 1px solid #000;`;
const ModList = styled.div`margin: 14px 0 4px;`;
const StackBox = styled.div`height: 156px; flex: none; border: 2px solid #efefef; background: #444;`;
const StackRow = styled.div`display: flex; align-items: center; height: 25px; border-bottom: 1px solid #5d5d5d; padding-left: 11px; gap: 11px;`;
const StackItem = styled.div`flex: 1; display: flex; align-items: center; justify-content: space-between; height: 23px; border: 1px solid #5b87c1; color: #fff; padding: 0 5px 0 2px; margin-right: 2px;`;
const Sq = styled.i`width: 17px; height: 17px; background: ${L};`;
const ModTools = styled.div`display: flex; align-items: center; height: 47px; padding: 0 0 0 7px; gap: 12px;`;
const MSep = styled.i`width: 1px; height: 17px; background: #111;`;
const Splitter = styled.div`display: flex; align-items: center; gap: 8px; height: 26px; padding: 0 8px; > hr { flex: 1; border: 0; height: 2px; background: #606060; margin: 0; }`;
const SplitGrip = styled(Grip)`width: 26px; height: 7px;`;
const Scroller = styled.div`flex: 1; min-height: 0; display: flex; gap: 4px;`;
const Rolls = styled.div`width: 279px; flex: none; overflow: hidden; display: flex; flex-direction: column; gap: 5px;`;
const Bar = styled.div`width: 8px; border-radius: 4px; background: #333; overflow: hidden; &::before { content: ""; display: block; height: ${(p) => p.$t}%; background: #505050; border: 1px solid #3c3c3c; border-radius: 4px; }`;
const Roll = styled.section`flex: none; border: 1px solid #3d3d3d; border-radius: 4px; background: #515151; display: flex; flex-direction: column;`;
const RollHead = styled.h3`margin: 0; height: 28px; display: flex; align-items: center; padding: 0 11px 0 9px; font-size: 16px; line-height: 20px; color: #fff; white-space: nowrap; overflow: hidden;`;
const RollTitle = styled.button`flex: 1; min-width: 0; display: flex; align-items: center; gap: ${(p) => (p.$open ? 9 : 11)}px; border: 0; background: none; padding: 0; font-weight: 700; overflow: hidden;`;
const RollGrip = styled.i`width: 9px; height: 9px; margin-left: 8px; background: repeating-linear-gradient(90deg, transparent 0 1px, #515151 1px 2px), repeating-linear-gradient(#8c8c8c 0 1px, #515151 1px 2px);`;
const RollBody = styled.div`display: flex; flex-direction: column; padding: ${(p) => p.$pad};`;
const Row = styled.div`display: flex; align-items: center; height: ${(p) => p.$h || 27}px; gap: ${(p) => p.$gap || 0}px; margin-top: ${(p) => p.$mt || 0}px; padding-left: ${(p) => p.$pl || 0}px; color: #f4f4f4; white-space: nowrap; flex: none; justify-content: ${(p) => p.$j || "flex-start"};`;
const Btn = styled(PlainButton)`
  height: ${(p) => p.$h || 27}px; ${(p) => (p.$w ? `width: ${p.$w}px;` : "flex: 1;")} background: ${(p) => (p.$off ? "#595959" : "#646464")}; color: ${(p) => (p.$off ? "#8c8c8c" : "#d2d2d2")};
  border: 1px solid #484848; border-radius: 5px; padding: 0; white-space: nowrap; min-width: 0; line-height: 18px;
`;
const Box = styled.input`
  appearance: none; width: 18px; height: 18px; margin: 0 4px 0 0; background: #606060; border: 1px solid #474747; display: grid; place-items: center; flex: none;
  &:checked::after { content: ""; width: 12px; height: 11px; background: #e6e6e6; clip-path: polygon(0 45%, 20% 35%, 38% 60%, 85% 0, 100% 10%, 42% 100%); }
`;
const Dot = styled.input`
  appearance: none; width: 19px; height: 19px; border-radius: 50%; margin: 0 9px 0 0; background: #606060; border: 1px solid #4a4a4a; display: grid; place-items: center; flex: none;
  &:checked::after { content: ""; width: 11px; height: 11px; border-radius: 50%; background: #dedede; }
`;
const Lab = styled.label`display: flex; align-items: center; color: #f4f4f4; white-space: nowrap; ${(p) => p.$w && `width: ${p.$w}px;`} flex: none;`;
const Check = ({ children, on, w, label }) => <Lab $w={w}><Box type="checkbox" defaultChecked={on} aria-label={label} />{children}</Lab>;
const Radio = ({ children, on, name, w }) => <Lab $w={w}><Dot type="radio" name={name} defaultChecked={on} />{children}</Lab>;
const SpinBox = styled.span`
  display: flex; align-items: center; height: ${(p) => p.$h || 25}px; width: ${(p) => p.$w}px; border: 1px solid #474747; background: ${(p) => (p.$off ? "#565656" : "#646464")}; padding-right: ${(p) => (p.$bare ? 0 : 5)}px; flex: none;
  color: ${(p) => (p.$off ? "#8c8c8c" : "#d2d2d2")}; justify-content: center;
`;
const SpinIn = styled.input`flex: 1; min-width: 0; width: 20px; border: 0; background: none; padding: 0 0 2px 4px; outline: 0; line-height: 18px;`;
const Arrows = ({ c = "#dcdcdc" }) => <Svg w={8} h={15}><path d="M0 6l4-6 4 6z M0 9h8l-4 6z" fill={c} /></Svg>;
const Spin = ({ w, h, value, off, label }) => (
  <SpinBox $w={w} $h={h} $off={off}><SpinIn aria-label={label} defaultValue={value} disabled={off} /><Arrows c={off ? "#8c8c8c" : undefined} /></SpinBox>
);
const Field = styled.label`display: flex; align-items: center; gap: ${(p) => p.$gap || 6}px; color: #f4f4f4;`;
const Group = styled.fieldset`margin: ${(p) => p.$mt || 0}px 0 0; border: 2px solid #3e3e3e; border-radius: 3px; padding: ${(p) => p.$pad}; min-width: 0;`;
const Legend = styled.legend`line-height: 14px; padding: 0 2px; margin-left: ${(p) => p.$ml || 3}px; color: #f4f4f4;`;
const WinIcon = () => <Svg w={11} h={10}><path d="M.5 .5h10v9H.5z" stroke="#000" /><path d="M0 0h11v3H0z" fill="#000" /></Svg>;
const Opt = () => <Btn $w={21} aria-label="Settings"><WinIcon /></Btn>;
const SmoothGrid = styled.div`display: grid; grid-template-columns: repeat(8, 24px); column-gap: 3px; row-gap: 4px;`;
const SubObj = styled(PlainButton)`width: 35px; height: 32px; border-radius: 5px; ${(p) => p.$on && "background: #5b87c1;"}`;

const Rollup = ({ title, open = true, pad, children }) => (
  <Roll>
    <RollHead>
      <RollTitle $open={open}>
        {open ? <Caret w={10} h={7} c="#c8c8c8" /> : <Svg w={8} h={10}><path d="M0 0l8 5-8 5z" fill="#b0b0b0" /></Svg>}{title}
      </RollTitle>
      <RollGrip />
    </RollHead>
    {open && <RollBody $pad={pad}>{children}</RollBody>}
  </Roll>
);

const EditPolygons = () => (
  <Rollup title="Edit Polygons" pad="10px 30px 15px 25px">
    <Row><Btn>Insert Vertex</Btn></Row>
    {[["Extrude", "Outline", 1], ["Bevel", "Inset", 1], ["Bridge", "Flip", 0]].map(([a, b, o]) => (
      <Row key={a} $mt={8} $gap={8}>
        <Row $gap={1}><Btn $w={85}>{a}</Btn><Opt /></Row>
        {o ? <Row $gap={1}><Btn $w={85}>{b}</Btn><Opt /></Row> : <Btn>{b}</Btn>}
      </Row>
    ))}
    {["Hinge From Edge", "Extrude Along Spline"].map((t) => <Row key={t} $mt={8} $gap={1}><Btn>{t}</Btn><Opt /></Row>)}
    <Row $mt={8}><Btn>Edit Triangulation</Btn></Row>
    <Row $mt={8} $gap={8}><Btn $w={107}>Retriangulate</Btn><Btn>Turn</Btn></Row>
  </Rollup>
);

const CommandPanel = () => (
  <Command>
    <CmdGrip />
    <CmdTabs>
      {[
        ["Create", <path d="M14 3v22M3 14h22" stroke="#9a9a9a" strokeWidth="4" />],
        ["Modify", <><path d="M3 3h20v20H3z" stroke={T} strokeWidth="1.5" /><path d="M5 22C6 11 12 6 21 5" stroke={L} strokeWidth="2.5" /><path d="M1 1h4v4H1zM21 1h4v4h-4zM1 21h4v4H1zM21 21h4v4h-4z" fill="#444" stroke={T} strokeWidth="1.5" /></>],
        ["Hierarchy", <><path d="M5 2h17v7H5z" fill="#9a9a9a" /><path d="M13 9v6M5 21v-6h17v6" stroke="#3f8f8f" strokeWidth="1.5" /><path d="M3 21h5v5H3zM19 21h5v5h-5z" fill="#3f8f8f" /></>],
        ["Motion", <><circle cx="10" cy="14" r="9" stroke="#3f8080" /><circle cx="13" cy="14" r="9" stroke="#3f8080" /><circle cx="17" cy="14" r="10" fill="#9a9a9a" stroke={D} /></>],
        ["Display", <path d="M2 3h24v15H2zM12 19h4v3H12zM8 22h12v2H8z" fill="#9a9a9a" />],
        ["Utilities", <path d="M4 2l4 4-2 3-5-3c-1 5 4 8 8 6l12 13c3 1 5-2 4-4L12 9c1-5-3-8-8-7z" fill="#9a9a9a" />],
      ].map(([t, g]) => <CmdTab key={t} $on={t === "Modify"} aria-label={t}><Svg s={27}>{g}</Svg></CmdTab>)}
    </CmdTabs>
    <CmdBody>
      <ColA>
        <NameRow><NameInput aria-label="Object name" defaultValue="Box006" /><Swatch aria-label="Object color" $w={25} $h={30} $c="#ecc8f2" /></NameRow>
        <ModList><Combo label="Modifier list" value="Modifier List" $h={28} $arrow={10} pl={3} line="#3e3e3e" /></ModList>
        <StackBox><StackRow><Svg w={6} h={10}><path d="M0 0l6 5-6 5z" fill="#e6e6e6" /></Svg><StackItem>Editable Poly<Sq /></StackItem></StackRow></StackBox>
        <ModTools>
          <Svg s={26}><path d="M16 1l9 8-3 1-4 6v5l-4-2-4-5-4-2 5-3 6-4z" fill={L} /><path d="M9 17l-8 8" stroke={L} strokeWidth="2" /></Svg>
          <MSep />
          <Svg w={28} h={28} v="-7 0 28 28"><path d="M1 1h12M3 1v23q0 3 4 3t4-3V1" stroke={L} strokeWidth="2" /><path d="M5 13h4v12H5z" fill={T} /></Svg>
          <MSep />
          <Svg s={30}><g stroke="#2c2c2c" strokeWidth="1.5" fill="#555"><circle cx="8" cy="8" r="7" /><circle cx="15" cy="22" r="7" /><circle cx="23" cy="21" r="7" fill="#444" /><path d="M15 5h10v7" fill="none" /></g></Svg>
          <Svg w={26} h={30}><g stroke="#2c2c2c" strokeWidth="1.5" fill="#555"><path d="M1 5h24v4H1zM9 5V1h8v4M3 9h20v20H3z" /><path d="M7 13h2v12H7zM12 13h2v12h-2zM17 13h2v12h-2z" fill="#222" /></g></Svg>
          <MSep />
          <Svg s={30}><path d="M1 1h24v28H1z" fill={L} /><path d="M3 5h18M4 10h8v6H4zM14 10h8v6h-8zM4 20h8v6H4zM14 20h8v6h-8z" stroke={D} strokeWidth="1.5" /><path d="M27 0l3 4-13 13-4 1 1-5z" fill={O} stroke={D} strokeWidth=".5" /></Svg>
        </ModTools>
        <Splitter><hr /><SplitGrip /><hr /></Splitter>
        <Scroller>
          <Rolls>
            <Rollup title="Selection" pad="6px 21px 42px 15px">
              <Row $h={32} $pl={27} $gap={1}>
                <SubObj aria-label="Vertex"><Svg s={24}><path d="M4 9v6M1 12h6M20 1v6M17 4h6M16 17v6M13 20h6" stroke={T} strokeWidth="3" /></Svg></SubObj>
                <SubObj aria-label="Edge"><Svg s={20}><path d="M1 11L17 2l-3 16z" stroke={T} strokeWidth="1.5" /></Svg></SubObj>
                <SubObj aria-label="Border"><Svg s={22}><path d="M3 2c8-3 17 1 17 9s-9 11-17 8c6-3 7-13 0-17z" stroke={T} strokeWidth="2" /></Svg></SubObj>
                <SubObj $on aria-label="Polygon"><Svg s={18}><path d="M.5 .5h17v17H.5z" fill={T} stroke={D} /></Svg></SubObj>
                <SubObj aria-label="Element"><Svg s={22}><path d="M11 0l11 5v12l-11 5L0 17V5z" fill={T} /><path d="M0 5l11 5 11-5M11 10v12" stroke="#444" strokeWidth="1.5" /></Svg></SubObj>
              </Row>
              <Row $h={30} $mt={6} $pl={15}><Check>By Vertex</Check></Row>
              <Row $h={30} $pl={15}><Check>Ignore Backfacing</Check></Row>
              <Row $h={30} $pl={15}><Check w={99}>By Angle:</Check><Spin w={121} value="45,0" off label="Angle" /></Row>
              <Row $mt={4} $pl={12} $gap={10}><Btn $w={107}>Shrink</Btn><Btn $w={107}>Grow</Btn></Row>
              <Row $mt={4} $pl={12} $gap={4}>
                <Btn $off $w={86}>Ring</Btn><SpinBox $bare $off $w={18}><Arrows c="#8c8c8c" /></SpinBox>
                <Row $pl={5} $gap={4}><Btn $off $w={87}>Loop</Btn><SpinBox $bare $off $w={18}><Arrows c="#8c8c8c" /></SpinBox></Row>
              </Row>
              <Group $mt={10} $pad="10px 0 10px 2px"><Legend>Preview Selection</Legend>
                <Row $h={20}><Radio name="prev" on w={74}>Off</Radio><Radio name="prev" w={92}>SubObj</Radio><Radio name="prev">Multi</Radio></Row>
              </Group>
              <Row $h={20} $mt={11} $j="center" $pl={66}>56 Polygons Selected</Row>
            </Rollup>
            <Rollup title="Soft Selection" open={false} />
            <EditPolygons />
            <Rollup title="Polygon: Material IDs" pad="15px 34px 14px 26px">
              <Row $h={25} $j="flex-end"><Field $gap={13}>Set ID:<Spin w={104} value="" label="Set ID" /></Field></Row>
              <Row $mt={13} $pl={4} $gap={5} $j="flex-end"><Btn>Select ID</Btn><Spin w={104} value="" label="Select ID" /></Row>
              <Row $mt={9}><Combo label="Material" value="" $w={218} $h={27} $arrow={12} bg="#565656" line="#474747" caret="#909090" /></Row>
              <Row $h={18} $mt={17} $pl={4}><Check on>Clear Selection</Check></Row>
            </Rollup>
          </Rolls>
          <Bar $t={93} />
        </Scroller>
      </ColA>
      <ColB>
        <Rolls>
          <Rollup title="Paint Deformation" open={false} />
          <Rollup title="Polygon: Smoothing Groups" pad="9px 28px 13px 27px">
            <SmoothGrid>{range(32, 1).map((n) => <Btn key={n} $h={26} aria-label={`Group ${n}`}>{n > 1 && n < 8 ? "" : n}</Btn>)}</SmoothGrid>
            <Row $mt={9} $gap={10}><Btn $w={103}>Select By SG</Btn><Btn $w={103}>Clear All</Btn></Row>
            <Row $mt={5} $gap={10}><Btn $w={103}>Auto Smooth</Btn><Spin w={99} value="45,0" label="Threshold" /></Row>
          </Rollup>
          <Rollup title="Polygon: Vertex Colors" pad="12px 35px 18px 0">
            <Row $h={24} $j="flex-end" $gap={6}>Color:<Swatch aria-label="Color" $w={103} $c="#fff" /></Row>
            <Row $h={24} $mt={9} $j="flex-end" $gap={6}>Illumination:<Swatch aria-label="Illumination" $w={103} $c="#fff" /></Row>
            <Row $h={24} $mt={9} $j="flex-end"><Field>Alpha:<Spin w={104} value="100,0" label="Alpha" /></Field></Row>
          </Rollup>
          <Rollup title="Subdivision Surface" pad="7px 28px 25px 22px">
            <Row $h={31} $pl={9}><Check on>Smooth Result</Check></Row>
            <Row $h={31} $pl={9}><Check>Use NURMS Subdivision</Check></Row>
            <Row $h={31} $pl={9}><Check on>Isoline Display</Check></Row>
            <Row $h={31} $pl={9} $gap={11}><Check on w={138}>Show Cage......</Check><Swatch aria-label="Cage color" $w={23} $c="#ffc800" /><Swatch aria-label="Selected cage color" $w={23} $c="#e6e68c" /></Row>
            <Group $mt={2} $pad="3px 5px 6px 7px"><Legend $ml={-2}>Display</Legend>
              <Row $h={25} $j="flex-end"><Field>Iterations:<Spin w={87} value="1" label="Display iterations" /></Field></Row>
              <Row $h={25} $mt={8} $j="flex-end"><Field>Smoothness:<Spin w={87} value="1,0" label="Display smoothness" /></Field></Row>
            </Group>
            <Group $mt={2} $pad="3px 5px 8px 7px"><Legend $ml={-2}>Render</Legend>
              <Row $h={25} $j="space-between"><Check label="Use render iterations" /><Field>Iterations:<Spin w={87} value="0" off label="Render iterations" /></Field></Row>
              <Row $h={25} $mt={7} $j="space-between"><Check label="Use render smoothness" /><Field>Smoothness:<Spin w={87} value="1,0" off label="Render smoothness" /></Field></Row>
            </Group>
            <Group $mt={3} $pad="6px 7px 6px"><Legend $ml={-2}>Separate By</Legend>
              <Row><Check>Smoothing Groups</Check></Row>
              <Row><Check>Materials</Check></Row>
            </Group>
            <Group $mt={3} $pad="3px 7px 15px"><Legend $ml={-2}>Update Options</Legend>
              {["Always", "When Rendering", "Manually"].map((t, i) => <Row key={t} $h={25}><Radio name="upd" on={!i}>{t}</Radio></Row>)}
              <Row $h={29} $mt={8} $pl={31}><Btn $w={143} $h={29}>Update</Btn></Row>
            </Group>
          </Rollup>
          <Rollup title="Edit Geometry" pad="9px 28px 14px 22px">
            <Row $pl={2}><Btn>Repeat Last</Btn></Row>
            <Group $mt={2} $pad="6px 11px 4px"><Legend $ml={-6}>Constraints</Legend>
              <Row $h={28}><Radio name="con" on w={90}>None</Radio><Radio name="con">Edge</Radio></Row>
              <Row $h={28}><Radio name="con" w={90}>Face</Radio><Radio name="con">Normal</Radio></Row>
            </Group>
            <Row $mt={10} $pl={18}><Check w={138}>Preserve UVs</Check><Opt /></Row>
          </Rollup>
        </Rolls>
        <Bar $t={70} />
      </ColB>
    </CmdBody>
  </Command>
);

/* ---------- time line and status ---------- */
const TimeArea = styled.section`display: flex; flex: none; height: 76px; padding: 7px 0 0 3px;`;
const TimeGrip = styled(Grip)`margin: 4px 4px 2px 0;`;
const TimeMain = styled.div`flex: 1; min-width: 0;`;
const SliderRow = styled.div`display: flex; gap: 2px; height: 32px;`;
const TBtn = styled(PlainButton)`height: 25px; width: ${(p) => p.$w || 22}px; background: #646464; border: 1px solid #555; border-radius: 4px; color: #e0e0e0;`;
const TrackRow = styled.div`display: flex; border-top: 1px solid #0c0c0c; height: 36px;`;
const TrackBtn = styled(PlainButton)`width: 75px; padding-right: 12px;`;
const Track = styled.div`flex: 1; margin-right: 75px; background: #2a2a2a; display: flex; justify-content: space-between; padding: 0 12px 0 11px;`;
const Tick = styled.div`
  width: 0; display: flex; flex-direction: column; align-items: center; font-size: 15px; line-height: 14px; color: #b4b4b4;
  &::before { content: ""; width: 1px; height: ${(p) => (p.$major ? 18 : 16)}px; background: #666; flex: none; }
  ${(p) => p.$major && css`&::after { content: ""; width: 1px; height: 4px; background: #666; }`}
`;
const Now = styled.span`background: #8a7f1c; width: 11px; height: 35px; margin-top: -18px; padding: 18px 1px 0; color: #e6d84a;`;

const Status = styled.footer`display: flex; flex: none; height: 83px; border-bottom: 2px solid #080808; padding: 0 15px 0 5px; color: #fff;`;
const Script = styled.div`display: grid; grid-template-rows: 35px 35px; gap: 2px; width: 147px; padding-top: 5px;`;
const ScriptIn = styled.input`width: 147px; height: 35px; border: 1px solid #f4f4f4; border-top: 2px solid #777; border-radius: 0; background: ${(p) => p.$c}; color: #7a7a7a; font: 18px/20px "Liberation Mono", monospace; padding: 0 3px 12px; outline: 0;`;
const VLine = styled.i`width: 2px; margin: 3px 4px 2px; background: #222;`;
const Message = styled.div`flex: 1; padding-top: 14px;`;
const Coords = styled.div`display: grid; grid-template-rows: 27px 31px; row-gap: 8px; padding-top: 10px; width: 657px; align-content: start;`;
const CRow = styled.div`display: flex; align-items: center; gap: ${(p) => p.$gap || 0}px; padding-left: ${(p) => p.$pl || 0}px;`;
const Coord = styled.label`display: flex; align-items: center; gap: 5px; margin-right: 20px; color: #fff;`;
const CoordIn = styled.input`width: 87px; height: 27px; background: #585858; border: 1px solid #404040;`;
const TagBtn = styled(PlainButton)`width: 32px; height: 31px; background: #5b87c1; border-radius: 4px; margin-right: 5px;`;
const Transport = styled.div`display: grid; grid-template-rows: 30px 26px; row-gap: 6px; padding-top: 7px; width: 190px; align-content: start;`;
const PSep = styled.i`width: 1px; height: 24px; background: #111;`;
const BigKey = styled(Btn)`margin: 7px 5px 0 0;`;
const KeyCol = styled.div`display: grid; gap: 2px; padding-top: 7px; width: 70px; margin-right: 5px; align-content: start;`;
const SelCol = styled.div`display: grid; grid-template-rows: 26px 31px; gap: 8px; padding-top: 7px; width: 171px; align-content: start;`;
const NavGrid = styled.div`display: grid; grid-template-columns: repeat(4, 34px); grid-auto-rows: 33px; padding: 6px 0 0 14px;`;
const NavBtn = styled(PlainButton)`position: relative; ${(p) => p.$more && css`&::after { content: ""; position: absolute; right: 1px; bottom: 0; border: 3px solid transparent; border-right-color: #ddd; border-bottom-color: #ddd; }`}`;

const nav = [
  ["Zoom", <><circle cx="14" cy="8" r="6.5" stroke={L} strokeWidth="2.5" /><path d="M9 13l-7 9" stroke={L} strokeWidth="3" /></>],
  ["Zoom All", <><path d="M5 1h8v7H5zM14 1h7v7h-7zM14 9h7v8h-7z" fill={T} /><circle cx="8" cy="12" r="4" stroke={L} strokeWidth="2" /><path d="M5 15l-4 6" stroke={L} strokeWidth="3" /></>],
  ["Zoom Extents", <><path d="M1 5V1h4M17 1h4v4M1 17v4h4M21 17v4h-4" stroke={L} strokeWidth="1.5" /><path d="M11 3l7 3v9l-7 4-7-4V6z" fill={T} /><path d="M4 6l7 4 7-4M11 10v9" stroke={D} /></>, 1],
  ["Extents All", <><path d="M9 4l6-4 6 3v12l-6 4-6-4z" fill={T} /><path d="M9 4l6 3 6-4M15 7v12" stroke={D} /><path d="M1 14l4-3 8 7-4 3zM5 18l6-6" fill={L} stroke={D} /></>, 1],
  ["Region Zoom", <><path d="M2 1h19v14h-6M2 1v12" stroke={L} strokeWidth="2" strokeDasharray="3 2" /><circle cx="10" cy="12" r="4" stroke={T} strokeWidth="2" /><path d="M7 15l-6 6" stroke={T} strokeWidth="2.5" /></>],
  ["Pan", <path d="M6 21L2 12l2-1 3 4V4h2v7l1-10h2v10l1-9h2v10l2-7h2v9l-2 7z" fill={L} />, 1],
  ["Orbit", <><circle cx="9" cy="11" r="8" fill={L} /><path d="M9 3v8H1a8 8 0 0 1 8-8z" fill={T} /><ellipse cx="12" cy="11" rx="12" ry="4" transform="rotate(-50 12 11)" stroke={L} strokeWidth="2" /></>, 1],
  ["Maximize", <><path d="M1 1h21v21H1z" fill={L} /><path d="M12 10l7-7M13 3h6v6" stroke={D} strokeWidth="1.5" /><path d="M3 12h8v8H3z" fill={D} /></>],
];
const prevKey = <path d="M8 2v18L0 11zM11 2h4v18h-4zM17 2h4v18h-4z" fill={L} />;
const nextKey = <path d="M0 2h4v18H0zM6 2h4v18H6zM13 2v18l8-9z" fill={L} />;

export default function App() {
  return (
    <Shell>
      <Global />
      <MenuBar>
        <Menus>{menus.map((m) => <MenuItem key={m}>{m}</MenuItem>)}</Menus>
        <SignIn><Svg w={16} h={18}><ellipse cx="8" cy="6" rx="4" ry="5" fill="#eee" stroke="#345" /><path d="M1 17q1-4 5-5h4q4 1 5 5z" fill="#eee" stroke="#345" /></Svg><SignText>Sign In</SignText><Svg w={14} h={6}><path d="M0 0h10L5 6z" fill="#000" /></Svg></SignIn>
        <WsLabel>Workspaces:<Combo label="Workspaces" value="Design Standard" $w={205} $h={28} /></WsLabel>
      </MenuBar>
      <Toolbar>
        <ToolGrip $vertical />
        {tools.map((t, i) => t === "|" ? <Sep key={i} /> : Array.isArray(t)
          ? <ToolBtn key={i} aria-label={t[1]} $on={t[2]} $more={t[3]}><Svg s={34}>{ic[t[0]]}</Svg></ToolBtn>
          : <ComboSlot key={i}><Combo label={t.label} value={t.value} $w={t.w} $h={26} pl={t.pl || 9} /></ComboSlot>)}
      </Toolbar>
      <Ribbon />
      <Workspace>
        <Strip>
          <StripGrip />
          <StripBody>
            <PlayTab aria-label="Show layout tabs"><Svg w={8} h={13}><path d="M0 0l8 6.5-8 6.5z" fill="#e8e8e8" /></Svg></PlayTab>
            <LayoutTab $on aria-label="Two views"><Pane /><Pane /></LayoutTab>
            <LayoutTab aria-label="Four views"><Pane $grey /><Pane $grey /><Pane $grey /><Pane $grey /></LayoutTab>
          </StripBody>
        </Strip>
        <Explorer>
          <Grip />
          <ExTop><ExTitle>Select</ExTitle><More>»</More></ExTop>
          <ExMain>
            <ExIcons>
              {exIcons.map((g, i) => <ExBtn key={i} $on aria-label={nm[i]}><Svg s={24}>{g}</Svg></ExBtn>)}
              <ExSep />
              {exIcons2.map((g, i) => <ExBtn key={i} aria-label={`List ${i}`}><Svg s={24}>{g}</Svg></ExBtn>)}
              <ExSep />
              {exIcons3.map((g, i) => <ExBtn key={i} aria-label={`Filter ${i}`}><Svg s={24}>{g}</Svg></ExBtn>)}
            </ExIcons>
            <ExList>
              <ExHead>Name (Sc</ExHead>
              <ExItem><Svg w={21} h={14}><path d="M0 7q10-13 21 0q-11 13-21 0z" fill={L} /><circle cx="10.5" cy="7" r="4" fill={D} /></Svg><Svg s={14}><circle cx="7" cy="7" r="7" fill={L} /></Svg></ExItem>
              <ExScroll>
                <PlainButton aria-label="Scroll left"><Svg w={8} h={12}><path d="M7 1L2 6l5 5" stroke="#444" strokeWidth="2" /></Svg></PlainButton>
                <PlainButton aria-label="Scroll right"><Svg w={8} h={12}><path d="M1 1l5 5-5 5" stroke="#444" strokeWidth="2" /></Svg></PlainButton>
              </ExScroll>
            </ExList>
          </ExMain>
          <ExBottom><More>»</More></ExBottom>
        </Explorer>
        <ViewRow>
          <Viewport><LeftScene /></Viewport>
          <Viewport active><RightScene /></Viewport>
        </ViewRow>
        <CommandPanel />
      </Workspace>
      <TimeArea>
        <TimeGrip $vertical />
        <TimeMain>
          <SliderRow><TBtn>&lt;</TBtn><TBtn $w={186}>0 / 100</TBtn><TBtn>&gt;</TBtn></SliderRow>
          <TrackRow>
            <TrackBtn aria-label="Open mini curve editor"><Svg w={22} h={16}><path d="M2 0v16" stroke={L} strokeWidth="4" strokeDasharray="2 1" /><path d="M7 14C9 14 9 1 12 1s3 14 6 14 2-5 3-8" stroke={T} strokeWidth="2" /></Svg></TrackBtn>
            <Track>
              {range(101).map((n) => <Tick key={n} $major={n % 5 === 0}>{n % 5 === 0 && (n ? n : <Now>0</Now>)}</Tick>)}
            </Track>
          </TrackRow>
        </TimeMain>
      </TimeArea>
      <Status>
        <Script><ScriptIn aria-label="Macro recorder" $c="#dcc3c4" /><ScriptIn aria-label="Script listener" $c="#fff" defaultValue="MAXScript Mini Listener" /></Script>
        <VLine />
        <Message>1 Object Selected</Message>
        <Coords>
          <CRow>
            <CRow $gap={20}>
              <Svg s={22}><path d="M1 6V1h5M16 1h5v5M1 16v5h5M21 16v5h-5" stroke={L} strokeWidth="1.5" /><path d="M6 6h10v10H6z" fill={T} /></Svg>
              <Svg w={17} h={22}><path d="M4 10V5a4.5 4 0 0 1 9 0v5" stroke={L} strokeWidth="2.5" /><path d="M0 9h17v13H0z" fill={L} /><path d="M8.5 12v6" stroke={D} strokeWidth="2.5" /></Svg>
              <Svg s={22}><path d="M2 1h18v20H2z" stroke={L} strokeWidth="2" /><circle cx="11" cy="11" r="4" stroke={L} strokeWidth="2" /><path d="M11 1v6M11 15v6M2 11h5M15 11h5" stroke={L} strokeWidth="2" /></Svg>
            </CRow>
            <CRow $pl={12}>{["X:", "Y:", "Z:"].map((a) => <Coord key={a}>{a}<CoordIn /></Coord>)}<span>Grid = 10,0</span></CRow>
          </CRow>
          <CRow $pl={455}><TagBtn aria-label="Time tag"><Svg s={20}><path d="M10 1l8 4v9l-8 5-8-5V5zM2 5l8 5 8-5M10 10v9" stroke={L} strokeWidth="2" /></Svg></TagBtn>Add Time Tag</CRow>
        </Coords>
        <Transport>
          <CRow $gap={8}>
            <Svg s={22}><path d="M0 3h4v16H0zM13 3v16L5 11zM22 3v16l-8-8z" fill={L} /></Svg><PSep />
            <Svg s={22}>{prevKey}</Svg>
            <CRow $pl={4}><Svg w={26} h={26}><path d="M0 1l19 11L0 24z" fill={L} /><path d="M26 20v6h-6z" fill={L} /></Svg></CRow>
            <Svg s={22}>{nextKey}</Svg><PSep />
            <Svg s={22}><path d="M18 3h4v16h-4zM0 3v16l8-8zM9 3v16l8-8z" fill={L} /></Svg>
          </CRow>
          <CRow $gap={6}>
            <Svg s={22}><path d="M9 4v14l-9-7zM13 4v14l9-7z" fill={L} /></Svg>
            <CRow $pl={4} $gap={10}><Spin w={104} h={26} value="0" label="Current frame" /><Svg s={23}><circle cx="9" cy="9" r="9" fill={L} /><path d="M9 3v7h5" stroke={D} strokeWidth="2" /><circle cx="17" cy="17" r="4.5" stroke={O} strokeWidth="3.5" fill="#444" /></Svg></CRow>
          </CRow>
        </Transport>
        <BigKey $w={64} $h={67} aria-label="Set keys"><Svg s={44}><path d="M17 2h8v15h16v7H25v16h-8V24H3v-7h14z" fill={L} stroke={D} /><circle cx="27" cy="37" r="4.5" stroke={T} strokeWidth="3" /><path d="M30 34l12-13M38 25l4 4M42 21l2 2" stroke={T} strokeWidth="3" /></Svg></BigKey>
        <KeyCol><Btn $w={70} $h={31}>Auto</Btn><Btn $w={70} $h={31}>Set K.</Btn></KeyCol>
        <SelCol>
          <Combo label="Key selection" value="Selected" $w={171} $h={26} />
          <CRow $gap={9}><Svg w={28} h={26}><path d="M1 4h26" stroke={L} strokeWidth="2" /><circle cx="3" cy="4" r="3" fill={L} /><circle cx="23" cy="4" r="3" fill={L} /><path d="M10 1h6v6h-6z" fill="#444" stroke={L} strokeWidth="2" /><path d="M1 25C8 24 6 12 8 6M25 25C18 24 20 12 18 6" stroke={T} strokeWidth="2" /></Svg><Btn $h={31}>Filters...</Btn></CRow>
        </SelCol>
        <NavGrid>{nav.map(([t, g, m]) => <NavBtn key={t} aria-label={t} $more={m}><Svg s={23}>{g}</Svg></NavBtn>)}</NavGrid>
      </Status>
    </Shell>
  );
}
